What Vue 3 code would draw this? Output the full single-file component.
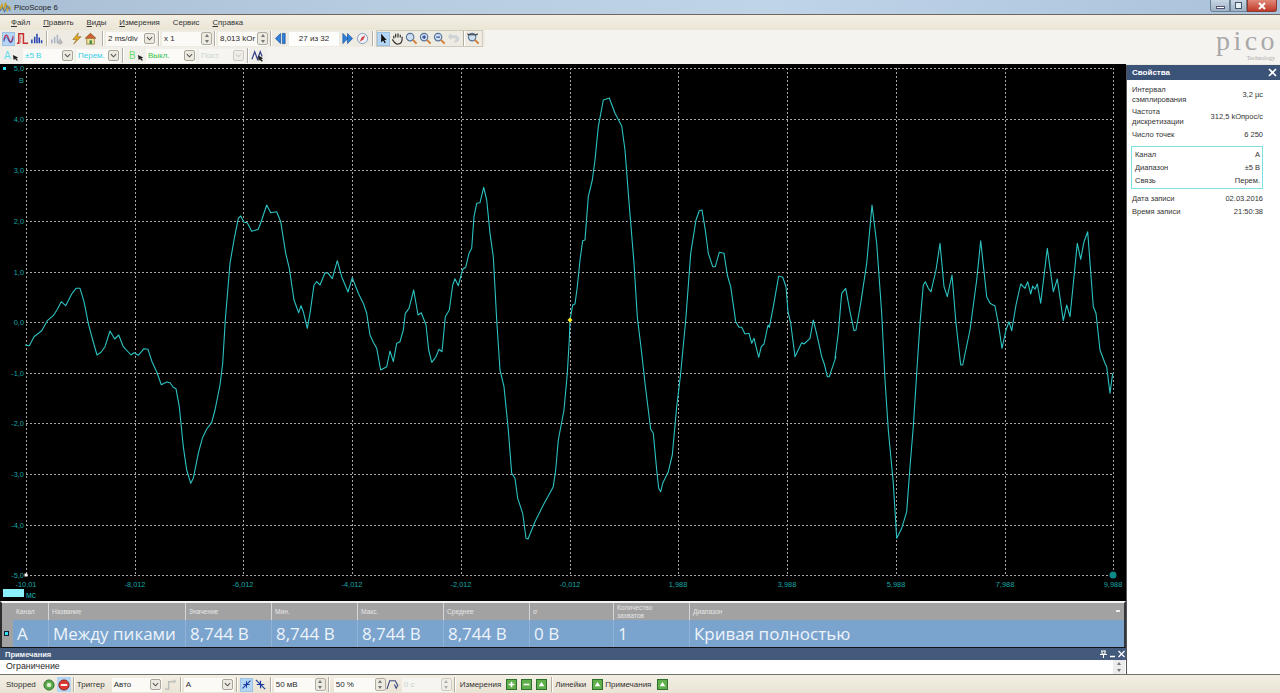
<template>
  <div class="window">
    <div class="titlebar">
      <svg class="app-icon" viewBox="0 0 12 12"><path d="M0 9 L2 3 L4 10 L6 1 L8 9 L10 5 L12 8" fill="none" stroke="#c9a020" stroke-width="1.6" /><path d="M0 10 L3 6 L5 11 L8 4 L11 10" fill="none" stroke="#3a6fc0" stroke-width="1" /></svg>
      <span class="title-text">PicoScope 6</span>
      <div class="win-btns">
        <span class="win-btn min"><i class="w-min"></i></span>
        <span class="win-btn max"><i class="w-max"></i></span>
        <span class="win-btn close">
          <svg viewBox="0 0 10 8" width="10" height="8"><path d="M2 1 L8 7 M8 1 L2 7" stroke="#fff" stroke-width="2" /></svg>
        </span>
      </div>
    </div>

    <div class="menubar">
      <span><u>Ф</u>айл</span>
      <span><u>П</u>равить</span>
      <span><u>В</u>иды</span>
      <span><u>И</u>змерения</span>
      <span>Сервис</span>
      <span><u>С</u>правка</span>
    </div>

    <div class="toolbars">
      <div class="tool-rows">
        <div class="toolbar row-one">
          <span class="tb on"><svg viewBox="0 0 14 14"><path d="M1 9 C3 1 5 1 7 7 S11 13 13 4" fill="none" stroke="#c03050" stroke-width="1.5" /><path d="M1 11 C3 4 5 4 7 9 S11 14 13 7" fill="none" stroke="#2a50c0" stroke-width="1.2" /></svg></span>
          <span class="tb"><svg viewBox="0 0 14 14"><path d="M1 12 H3 V2 H8 V12 H13" fill="none" stroke="#c83030" stroke-width="1.6" /><path d="M5 4 V12" stroke="#e08080" /></svg></span>
          <span class="tb"><svg viewBox="0 0 14 14"><path d="M2 12 V8 M5 12 V5 M7.500 12 V2 M10 12 V6 M12.500 12 V9" stroke="#2040b0" stroke-width="1.6" /></svg></span>
          <span class="sep"></span>
          <span class="tb"><svg viewBox="0 0 14 14"><path d="M2 12 V8 M5 12 V5 M8 12 V3 M11 12 V7" stroke="#a8b0c8" stroke-width="1.6" /><circle cx="11" cy="11" r="2.500" fill="#b8b8b8" /></svg></span>
          <span class="gap6"></span>
          <span class="tb"><svg viewBox="0 0 14 14"><path d="M9 1 L3 8 H7 L4 13 L12 5 H8 Z" fill="#e8a820" stroke="#80602a" stroke-width="0.6" /></svg></span>
          <span class="tb"><svg viewBox="0 0 14 14"><path d="M1 7 L7 1.500 L13 7" fill="#d06030" stroke="#905020" stroke-width="1" /><rect x="3" y="7" width="8" height="6" fill="#f2e2a0" stroke="#907030" stroke-width="0.8" /><rect x="6" y="9" width="2.500" height="4" fill="#3a8a40" /></svg></span>
          <span class="sep ml4"></span>

          <div class="combo w50">
            <span class="val">2 ms/div</span>
            <span class="drop"><svg viewBox="0 0 8 5"><path d="M1 1 L4 4 L7 1" fill="none" stroke="#555" stroke-width="1.200" /></svg></span>
          </div>
          <span class="sep"></span>
          <div class="combo w50">
            <span class="val">x 1</span>
            <span class="spin"><i class="up"></i><i class="down"></i></span>
          </div>
          <span class="sep"></span>
          <div class="combo w50">
            <span class="val">8,013 kОг</span>
            <span class="spin"><i class="up"></i><i class="down"></i></span>
          </div>
          <span class="sep"></span>

          <span class="tb nav"><svg viewBox="0 0 14 14"><path d="M7 1.500 L1.500 7 L7 12.500 Z M12 1.500 H9 V12.500 H12 Z" fill="#2f7fd8" stroke="#15509a" stroke-width="0.7" /></svg></span>
          <div class="capture">27 из 32</div>
          <span class="tb nav"><svg viewBox="0 0 14 14"><path d="M2 1.500 L7.500 7 L2 12.500 Z M7 1.500 L12.500 7 L7 12.500 Z" fill="#2f7fd8" stroke="#15509a" stroke-width="0.7" /></svg></span>
          <span class="tb ml2"><svg viewBox="0 0 14 14"><circle cx="7" cy="7" r="5.500" fill="#eef2f8" stroke="#8098b8" /><path d="M10 3.500 L6 6 L4 10.500 L8 8 Z" fill="#d04040" /></svg></span>
          <span class="sep"></span>

          <div class="cursor-group">
            <span class="tb on"><svg viewBox="0 0 14 14"><path d="M4 1 V12 L6.500 9.500 L8.500 13 L10 12 L8 9 H11 Z" fill="#111" /></svg></span>
            <span class="tb"><svg viewBox="0 0 14 14"><path d="M3 7 V4 M5 6 V2 M7.500 6 V1.500 M10 6 V3 M12 7 V5 M12 7 C12 11 10 13 7 13 C4.500 13 3.500 11 1.500 8" fill="none" stroke="#333" stroke-width="1.300" /></svg></span>
            <span class="tb"><svg viewBox="0 0 14 14"><use href="#lens" /></svg></span>
            <span class="tb"><svg viewBox="0 0 14 14"><use href="#lens" /><path d="M3.500 5.500 H7.500 M5.500 3.500 V7.500" stroke="#2a3f90" stroke-width="1.200" /></svg></span>
            <span class="tb"><svg viewBox="0 0 14 14"><use href="#lens" /><path d="M3.500 5.500 H7.500" stroke="#2a3f90" stroke-width="1.200" /></svg></span>
            <span class="tb"><svg viewBox="0 0 14 14"><path d="M4 2 L1.500 5 L4 8 V6 H8 C10 6 10.500 9 8 11 C11 11 13 9 12.500 6.500 C12 4.500 10 4 8 4 H4 Z" fill="#d4d8dc" stroke="#bcc0c8" stroke-width="0.600" /></svg></span>
            <span class="sep"></span>
            <span class="tb"><svg viewBox="0 0 14 14"><use href="#lens" /><path d="M1 3 H11 V1.500 M1 3 V1.500" fill="none" stroke="#222" stroke-width="1" /></svg></span>
          </div>
        </div>

        <div class="toolbar row-two">
          <span class="chan a">A<svg viewBox="0 0 8 8"><path d="M1 1 L7 4 L5 5 L7 7 L5 7.500 L3.500 5.500 L2 7 Z" fill="#222" /></svg></span>
          <div class="combo w51 cyan">
            <span class="val">±5 В</span>
            <span class="drop"><svg viewBox="0 0 8 5"><path d="M1 1 L4 4 L7 1" fill="none" stroke="#555" stroke-width="1.200" /></svg></span>
          </div>
          <div class="combo w44 cyan">
            <span class="val">Перем.</span>
            <span class="drop"><svg viewBox="0 0 8 5"><path d="M1 1 L4 4 L7 1" fill="none" stroke="#555" stroke-width="1.200" /></svg></span>
          </div>
          <span class="sep"></span>
          <span class="chan b">B<svg viewBox="0 0 8 8"><path d="M1 1 L7 4 L5 5 L7 7 L5 7.500 L3.500 5.500 L2 7 Z" fill="#222" /></svg></span>
          <div class="combo w50 green">
            <span class="val">Выкл.</span>
            <span class="drop"><svg viewBox="0 0 8 5"><path d="M1 1 L4 4 L7 1" fill="none" stroke="#555" stroke-width="1.200" /></svg></span>
          </div>
          <div class="combo w46 faded ml3">
            <span class="val">Пост.</span>
            <span class="drop"><svg viewBox="0 0 8 5"><path d="M1 1 L4 4 L7 1" fill="none" stroke="#aaa" stroke-width="1.200" /></svg></span>
          </div>
          <span class="sep"></span>
          <span class="tb"><svg viewBox="0 0 14 14"><path d="M1 11 L4 3 L7 11 L10 3 L12 8" fill="none" stroke="#33408a" stroke-width="1.300" /><path d="M8 7 L13 10 L11 11 L13 13 L11 13.500 L9.500 11.500 L8 13 Z" fill="#222" /></svg></span>
        </div>
      </div>

      <div class="logo">
        <div class="logo-word">pico</div>
        <div class="logo-sub">Technology</div>
      </div>
    </div>

    <div class="body">
      <div class="left-col">
        <svg class="plot" viewBox="0 64 1126 537" width="1126" height="537">
          <defs>
            <g id="lens">
              <circle cx="5.500" cy="5.500" r="4" fill="#cfe0f2" stroke="#55749a" stroke-width="1.200" />
              <path d="M8.500 8.500 L12.500 12.500" stroke="#d08038" stroke-width="2.200" />
            </g>
          </defs>
          <rect x="3" y="67" width="3" height="3" fill="#35e0f0" />
          <line v-for="y in gridY" :key="'h' + y" class="grid" x1="26" x2="1113" :y1="y" :y2="y" />
          <line v-for="x in gridX" :key="'v' + x" class="grid" y1="68" y2="575" :x1="x" :x2="x" />
          <text v-for="t in yLabels" :key="t.label" class="axis" x="24" text-anchor="end" :y="t.y">{{ t.label }}</text>
          <text class="axis" x="24" y="83" text-anchor="end">В</text>
          <text v-for="t in xLabels" :key="t.label" class="axis" y="587" text-anchor="middle" :x="t.x">{{ t.label }}</text>
          <rect x="3" y="589" width="21" height="8" fill="#8cf0fb" />
          <text class="axis unit" x="26" y="598">мс</text>
          <rect x="24.500" y="573.500" width="3" height="3" fill="#fff" />
          <path class="trace" :d="tracePath" />
          <path d="M570 317.500 L572.500 320 L570 322.500 L567.500 320 Z" fill="#ffe818" />
          <circle cx="1113" cy="575" r="3.500" fill="#0f8a8a" />
        </svg>

        <div class="measure">
          <div class="m-head">
            <span></span>
            <span>Канал</span>
            <span>Название</span>
            <span>Значение</span>
            <span>Мин.</span>
            <span>Макс.</span>
            <span>Среднее</span>
            <span>σ</span>
            <span class="two-line">Количество захватов</span>
            <span>Диапазон</span>
            <i class="m-scroll"></i>
          </div>
          <div class="m-row">
            <span class="m-flag"><i></i></span>
            <span>A</span>
            <span>Между пиками</span>
            <span>8,744 В</span>
            <span>8,744 В</span>
            <span>8,744 В</span>
            <span>8,744 В</span>
            <span>0 В</span>
            <span>1</span>
            <span>Кривая полностью</span>
          </div>
        </div>

        <div class="notes">
          <div class="notes-head">
            <span>Примечания</span>
            <span class="notes-ctl">
              <svg viewBox="0 0 7 8" width="7" height="8"><path d="M1 1 H6 M2 1 V4 H5 V1 M0 4.500 H7 M3.500 4.500 V8" fill="none" stroke="#fff" stroke-width="1.100" /></svg>
              <svg viewBox="0 0 7 8" width="7" height="8"><path d="M1 6.500 H6" stroke="#fff" stroke-width="1.500" /></svg>
              <svg viewBox="0 0 7 8" width="7" height="8"><path d="M0.500 1 L6.500 7 M6.500 1 L0.500 7" stroke="#fff" stroke-width="1.300" /></svg>
            </span>
          </div>
          <div class="notes-body">
            <span>Ограничение</span>
            <span class="notes-scroll"><i class="up"></i><i class="down"></i></span>
          </div>
        </div>
      </div>

      <aside class="props">
        <div class="props-head">
          <span>Свойства</span>
          <svg viewBox="0 0 9 9" width="9" height="9"><path d="M1 1 L8 8 M8 1 L1 8" stroke="#fff" stroke-width="1.700" /></svg>
        </div>
        <div class="props-list">
          <div class="prop tall"><span>Интервал<br />сэмплирования</span><span>3,2 µс</span></div>
          <div class="prop tall"><span>Частота<br />дискретизации</span><span>312,5 kОпрос/с</span></div>
          <div class="prop"><span>Число точек</span><span>6 250</span></div>
          <div class="chan-box">
            <div class="prop"><span>Канал</span><span>A</span></div>
            <div class="prop"><span>Диапазон</span><span>±5 В</span></div>
            <div class="prop"><span>Связь</span><span>Перем.</span></div>
          </div>
          <div class="prop"><span>Дата записи</span><span>02.03.2016</span></div>
          <div class="prop"><span>Время записи</span><span>21:50:38</span></div>
        </div>
      </aside>
    </div>

    <div class="statusbar">
      <span class="st-text first">Stopped</span>
      <span class="round"><svg viewBox="0 0 13 13"><circle cx="6.500" cy="6.500" r="5.500" fill="#5aa84a" stroke="#2f6f30" /><circle cx="6.500" cy="6.500" r="2.500" fill="#d8f0c8" /></svg></span>
      <span class="round on"><svg viewBox="0 0 13 13"><circle cx="6.500" cy="6.500" r="5.500" fill="#dc3a30" stroke="#8a1f1a" /><rect x="3" y="5.500" width="7" height="2" fill="#fff" /></svg></span>
      <span class="sep"></span>
      <span class="st-text trig">Триггер</span>
      <div class="combo w50">
        <span class="val">Авто</span>
        <span class="drop"><svg viewBox="0 0 8 5"><path d="M1 1 L4 4 L7 1" fill="none" stroke="#555" stroke-width="1.200" /></svg></span>
      </div>
      <span class="tb ml2"><svg viewBox="0 0 14 14"><path d="M1 12 H5 V4 H11" fill="none" stroke="#b8bcb8" stroke-width="1.500" /><circle cx="11" cy="3.500" r="2" fill="#c8ccc8" /></svg></span>
      <span class="sep"></span>
      <div class="combo w50">
        <span class="val">A</span>
        <span class="drop"><svg viewBox="0 0 8 5"><path d="M1 1 L4 4 L7 1" fill="none" stroke="#555" stroke-width="1.200" /></svg></span>
      </div>
      <span class="sep"></span>
      <span class="tb on"><svg viewBox="0 0 14 14"><path d="M2 12 L12 2 M7 3 V11 M3 7 H11" fill="none" stroke="#1a3aa0" stroke-width="1.300" /></svg></span>
      <span class="tb"><svg viewBox="0 0 14 14"><path d="M2 2 L12 12 M7 3 V11 M3 7 H11" fill="none" stroke="#1a3aa0" stroke-width="1.300" /></svg></span>
      <span class="sep"></span>
      <div class="combo w52">
        <span class="val">50 мВ</span>
        <span class="spin"><i class="up"></i><i class="down"></i></span>
      </div>
      <span class="sep"></span>
      <div class="combo w52 ml2">
        <span class="val">50 %</span>
        <span class="spin"><i class="up"></i><i class="down"></i></span>
      </div>
      <span class="tb"><svg viewBox="0 0 14 14"><path d="M1 12 L4 3 H10 L13 9 M9 7 L11 11 L13 7" fill="none" stroke="#3a4a80" stroke-width="1.200" /></svg></span>
      <div class="combo w50 faded ml2">
        <span class="val">0 с</span>
        <span class="spin"><i class="up"></i><i class="down"></i></span>
      </div>
      <span class="sep"></span>
      <span class="st-text ml2">Измерения</span>
      <span class="gbtn first-g"><svg viewBox="0 0 11 11"><path d="M2 5.500 H9 M5.500 2 V9" stroke="#fff" stroke-width="2" /></svg></span>
      <span class="gbtn"><svg viewBox="0 0 11 11"><path d="M2 5.500 H9" stroke="#fff" stroke-width="2" /></svg></span>
      <span class="gbtn"><svg viewBox="0 0 11 11"><path d="M5.500 2.500 L9 7.500 H2 Z" fill="#fff" /></svg></span>
      <span class="sep"></span>
      <span class="st-text">Линейки</span>
      <span class="gbtn"><svg viewBox="0 0 11 11"><path d="M5.500 2.500 L9 7.500 H2 Z" fill="#fff" /></svg></span>
      <span class="st-text">Примечания</span>
      <span class="gbtn"><svg viewBox="0 0 11 11"><path d="M5.500 2.500 L9 7.500 H2 Z" fill="#fff" /></svg></span>
    </div>
  </div>
</template>

<script setup>
import { computed } from 'vue'

const gridY = [68, 119, 170, 221, 272, 322, 373, 423, 474, 525, 575]
const gridX = [26, 135, 243, 352, 461, 570, 678, 787, 896, 1005, 1113]

const yValues = ['5,0', '4,0', '3,0', '2,0', '1,0', '0,0', '-1,0', '-2,0', '-3,0', '-4,0', '-5,0']
const yLabels = yValues.map((label, i) => ({ label, y: gridY[i] + 3 }))

const xValues = ['-10,01', '-8,012', '-6,012', '-4,012', '-2,012', '-0,012', '1,988', '3,988', '5,988', '7,988', '9,988']
const xLabels = xValues.map((label, i) => ({ label, x: gridX[i] }))

// trace points read off 3x crops of the capture: [left, top, [x, y, x, y...]]
const traceParts = [
  [20, 190, [15,465,28,467,42,440,65,422,82,392,100,377,112,358,124,335,137,347,155,312,168,295,180,295,192,335,205,400,218,450,231,495,243,487,255,470,270,423,284,447,296,435,310,470,333,495,342,488,355,496,372,476,384,478,396,515,410,545,424,584,440,576,450,578,460,592,468,596,478,650,490,770,500,840,512,880,520,865,535,790,547,745,560,717,575,698,585,660,600,585,608,520,616,390,630,220,642,150,655,85,662,78,672,97,682,98,695,124,715,118,725,90,740,45,752,68,770,65,782,95,797,190,808,235,822,330,836,368]],
  [290, 170, [26,428,33,407,40,425,52,475,60,430,72,345,80,335,90,345,105,308,115,310,127,326,142,272,155,320,174,366,187,323,205,370,220,400,230,430,240,495,250,517,260,535,272,600,290,590,300,543,310,575,320,520,330,515,340,480,346,430,357,415,371,360,384,435,394,428,408,465,416,540,425,577,437,562,447,538,456,545,466,440,478,420,488,345,495,326,505,347,518,298,527,292,537,250,545,235,552,140,560,100,570,98,581,52,590,90,600,190,610,260,620,450,630,600,642,650,655,780,665,910,675,925,683,985,698,1030,708,1105,714,1107,735,1055,760,1005,790,950,797,900,805,810,822,720,832,610,838,510]],
  [560, 90, [30,690,38,645,45,642,52,590,60,510,68,452,75,450,85,320,97,270,105,210,115,110,130,30,148,24,165,70,185,108,195,180,205,310,222,520,232,680,245,790,255,880,272,1018,280,1030,290,1140,296,1195,302,1205,308,1180,325,1145,337,1095,350,950,362,850,378,680,392,490,408,390,418,362,426,360,436,420,445,490,458,530,466,530,478,487,492,490,502,555,512,590,527,695,537,712,545,712,555,732,567,730,575,760,582,745,596,802,604,770,612,762,624,705,628,712,640,650,656,558,668,562,678,590,684,665,692,700,705,800,725,758,732,762,750,745,760,690,772,740,785,800,793,822,802,860,808,860,828,800]],
  [830, 200, [15,475,25,400,35,280,47,265,60,335,72,392,78,390,92,310,110,190,126,15,140,130,155,340,165,540,175,690,190,850,200,1015,215,985,230,935,240,800,250,680,260,520,270,370,280,255,286,245,295,265,303,275,318,210,330,130,342,260,352,290,366,225,378,370,392,495,398,495,420,390,440,240,452,122,470,290,480,310,495,318,505,370,516,445,528,390,537,365,545,392,558,315,572,252,585,265,593,245,602,282,608,258,615,268,622,252,632,310,652,145,670,275,682,237,700,362,710,315,720,350,742,130,752,178,762,125,773,95,790,320,798,340,810,450,825,490,830,500,840,580,848,520]]
]

const tracePath = computed(() => {
  const out = []
  for (const [left, top, pts] of traceParts) {
    for (let i = 0; i < pts.length; i += 2) {
      const x = (left + pts[i] / 3).toFixed(1)
      const y = (top + pts[i + 1] / 3).toFixed(1)
      out.push(`${out.length ? 'L' : 'M'}${x} ${y}`)
    }
  }
  return out.join(' ')
})
</script>

<style>
html, body {
  margin: 0;
  background: #ece9e0;
  overflow: hidden;
}
</style>

<style scoped>
.window {
  width: 1280px;
  height: 693px;
  display: flex;
  flex-direction: column;
  overflow: hidden;
  font-family: "Liberation Sans", "Noto Sans", sans-serif;
  font-size: 8px;
  color: #2a2a2a;
}

.titlebar {
  flex: 0 0 14px;
  display: flex;
  align-items: center;
  background: linear-gradient(90deg, #a9bfd4 0%, #b8cce0 30%, #c0d4e8 60%, #a9c2da 100%);
  border-bottom: 1px solid #70665e;
}
.app-icon { width: 11px; height: 11px; margin-right: 3px; }
.title-text { font-size: 7.8px; color: #222; }
.win-btns { margin-left: auto; margin-right: 3px; display: flex; align-self: flex-start; height: 12px; }
.win-btn {
  height: 12px;
  display: flex;
  align-items: center;
  justify-content: center;
  background: linear-gradient(#c8d6e4, #9fb2c6);
  border: 1px solid #6e8296;
  border-top: 0;
  box-sizing: border-box;
}
.win-btn.min { width: 20px; border-radius: 0 0 0 3px; }
.win-btn.max { width: 17px; }
.win-btn.close { width: 30px; background: linear-gradient(#e08878, #c03a28); border-color: #8a3a30; border-radius: 0 0 3px 0; }
.w-min { width: 7px; height: 1px; background: #fff; border: 1px solid #557; margin-top: 3px; }
.w-max { width: 5px; height: 5px; border: 1px solid #456; background: #e6eef6; }

.menubar {
  flex: 0 0 15px;
  display: flex;
  align-items: center;
  gap: 13px;
  padding-left: 11px;
  background: linear-gradient(#f4efe4, #ebe5d6);
  font-size: 7.8px;
  color: #333;
}

.toolbars {
  flex: 0 0 34px;
  display: flex;
  justify-content: space-between;
  background: #f5f3ef;
}
.tool-rows { display: flex; flex-direction: column; }
.toolbar { display: flex; align-items: center; height: 17px; }
.row-one { background: #eeebe2; padding-left: 2px; padding-right: 2px; }
.row-two { background: #f1efe9; padding-left: 4px; width: 263px; }

.tb {
  width: 13px;
  height: 14px;
  margin-right: 1px;
  display: inline-flex;
  align-items: center;
  justify-content: center;
  flex: none;
}
.tb svg { width: 13px; height: 13px; }
.tb.on { background: #b4d6f4; border: 1px solid #9cc2e4; box-sizing: border-box; }
.sep { width: 1px; height: 15px; background: #b4aea2; border-right: 1px solid #fff; margin: 0 2px; flex: none; }
.ml4 { margin-left: 4px; }
.ml3 { margin-left: 3px; }
.ml2 { margin-left: 2px; }
.gap6 { width: 6px; flex: none; }

.combo {
  display: flex;
  align-items: center;
  justify-content: space-between;
  height: 14px;
  background: #fbfaf7;
  box-sizing: border-box;
  padding-left: 2px;
  flex: none;
}
.w44 { width: 44px; }
.w46 { width: 46px; }
.w50 { width: 50px; }
.w51 { width: 51px; margin-right: 2px; }
.w52 { width: 52px; }
.val { white-space: nowrap; }
.drop {
  width: 11px;
  height: 11px;
  display: flex;
  align-items: center;
  justify-content: center;
  border: 1px solid #a8a498;
  border-radius: 2px;
  background: #ece9e0;
  box-sizing: border-box;
  margin-right: 1px;
}
.drop svg { width: 7px; height: 5px; }
.spin {
  width: 11px;
  height: 13px;
  display: flex;
  flex-direction: column;
  align-items: center;
  justify-content: space-around;
  border: 1px solid #b0aca0;
  border-radius: 2px;
  background: #ece9e0;
  box-sizing: border-box;
}
.spin .up, .notes-scroll .up { width: 0; height: 0; border: 2.5px solid transparent; border-top: 0; border-bottom: 3px solid #777; }
.spin .down, .notes-scroll .down { width: 0; height: 0; border: 2.5px solid transparent; border-bottom: 0; border-top: 3px solid #777; }
.cyan .val { color: #35d0e8; }
.green .val { color: #35c048; }
.faded { background: #f6f5f1; }
.faded .val { color: #c8d4c8; }
.faded .spin, .faded .drop { opacity: 0.55; }

.capture {
  width: 50px;
  height: 14px;
  background: #fdfdfb;
  text-align: center;
  line-height: 14px;
  margin: 0 2px;
  flex: none;
}
.nav { margin: 0; }
.cursor-group { display: flex; align-items: center; border: 1px solid #cfcabc; background: #eeebe2; height: 15px; padding-right: 1px; }

.chan { display: inline-flex; align-items: flex-end; width: 19px; font-size: 10px; flex: none; }
.chan svg { width: 7px; height: 7px; margin-left: 1px; }
.chan.a { color: #5fe0ee; }
.chan.b { color: #66dd70; margin-left: 3px; width: 17px; }

.logo { width: 66px; text-align: center; color: #a8a8a8; }
.logo-word { font-family: "Liberation Serif", serif; font-size: 28px; line-height: 22px; letter-spacing: 3.5px; }
.logo-sub { font-family: "Liberation Serif", serif; font-size: 6px; line-height: 7px; text-align: right; padding-right: 5px; margin-top: 3px; }

.body { flex: 1; display: flex; min-height: 0; }
.left-col { width: 1126px; flex: none; display: flex; flex-direction: column; }
.plot { display: block; background: #000; flex: none; }
.grid { stroke: #a8a8a8; stroke-width: 1; stroke-dasharray: 2 2; shape-rendering: crispEdges; }
.axis { fill: #17a6a6; font-size: 7.4px; font-family: "Liberation Sans", "Noto Sans", sans-serif; }
.axis.unit { font-size: 8.5px; }
.trace { fill: none; stroke: #2cc2c2; stroke-width: 1.1; stroke-linejoin: round; }

.measure {
  flex: 0 0 47px;
  background: #a2a2a2;
  border-top: 2px solid #f4f4f4;
  border-left: 2px solid #2c2c2c;
  border-right: 2px solid #33373c;
  border-bottom: 1px solid #111;
  box-sizing: border-box;
}
.m-head, .m-row {
  display: grid;
  grid-template-columns: 11px 35px 137px 86px 86px 86px 86px 84px 76px 1fr;
}
.m-head { position: relative; height: 17px; font-size: 6.6px; color: #e6e6e6; }
.m-head > span { display: flex; align-items: center; padding-left: 3px; border-left: 1px solid #d6d6d6; line-height: 8px; }
.m-head > span:first-child, .m-head > span:nth-child(2) { border-left: 0; }
.m-head .two-line { padding-right: 14px; }
.m-scroll { position: absolute; right: 4px; top: 7px; width: 4px; height: 2px; background: #eee; }
.m-row { height: 27px; background: #7aa3cd; font-family: "Open Sans", "Noto Sans", sans-serif; font-size: 17px; color: #eef4fb; }
.m-row > span { display: flex; align-items: center; padding-left: 4px; border-left: 1px solid #8fb2d6; white-space: nowrap; overflow: hidden; }
.m-row > span.m-flag { background: #a2a2a2; border: 0; padding-left: 2px; }
.m-row > span:nth-child(2) { border: 0; }
.m-flag i { width: 3px; height: 3px; background: #3ce0ee; border: 1px solid #123; }

.notes { flex: 1; display: flex; flex-direction: column; border-bottom: 1px solid #70706c; }
.notes-head {
  flex: 0 0 12px;
  display: flex;
  align-items: center;
  justify-content: space-between;
  background: #445a7c;
  color: #f0f4f8;
  font-size: 7.5px;
  font-weight: 700;
  padding: 0 1px 0 5px;
}
.notes-ctl { display: flex; gap: 2px; }
.notes-body { flex: 1; display: flex; justify-content: space-between; background: #fff; padding-left: 6px; line-height: 13px; font-size: 8.8px; }
.notes-scroll { width: 12px; margin-right: 1px; background: #ececec; display: flex; flex-direction: column; align-items: center; justify-content: space-around; }

.props {
  flex: 1;
  background: #fff;
  border-left: 1px solid #55555a;
  border-bottom: 1px solid #70706c;
  display: flex;
  flex-direction: column;
  margin-top: 1px;
  color: #333;
}
.props-head {
  flex: 0 0 15px;
  display: flex;
  align-items: center;
  justify-content: space-between;
  padding: 0 3px 0 5px;
  background: #3c5378;
  color: #fff;
  font-weight: 700;
}
.props-list { padding: 4px 17px 0 5px; display: flex; flex-direction: column; font-size: 7.5px; }
.prop { display: flex; align-items: center; justify-content: space-between; height: 13px; white-space: nowrap; }
.prop.tall { height: 22px; line-height: 10px; }
.chan-box { border: 1px solid #7fe0e0; padding: 1px 2px 1px 3px; margin: 5px 0 2.5px -1px; }

.statusbar {
  flex: 0 0 18px;
  display: flex;
  align-items: center;
  background: linear-gradient(#f4efe4, #e9e3d4);
  font-size: 8px;
  padding-top: 1px;
  box-sizing: border-box;
}
.st-text { margin-right: 4px; white-space: nowrap; color: #333; }
.st-text.first { margin-left: 6px; margin-right: 6px; }
.st-text.trig { margin-right: 7px; }
.round { width: 14px; height: 15px; display: inline-flex; align-items: center; justify-content: center; flex: none; }
.round svg { width: 12px; height: 12px; }
.round.on { background: #b4d6f4; margin-left: 1px; }
.gbtn {
  width: 11px;
  height: 11px;
  margin: 0 2px;
  display: inline-flex;
  align-items: center;
  justify-content: center;
  background: #5fb04a;
  border: 1px solid #2f6f30;
  box-sizing: border-box;
  flex: none;
}
.gbtn svg { width: 9px; height: 9px; }
.first-g { margin-left: 1px; }
</style>
